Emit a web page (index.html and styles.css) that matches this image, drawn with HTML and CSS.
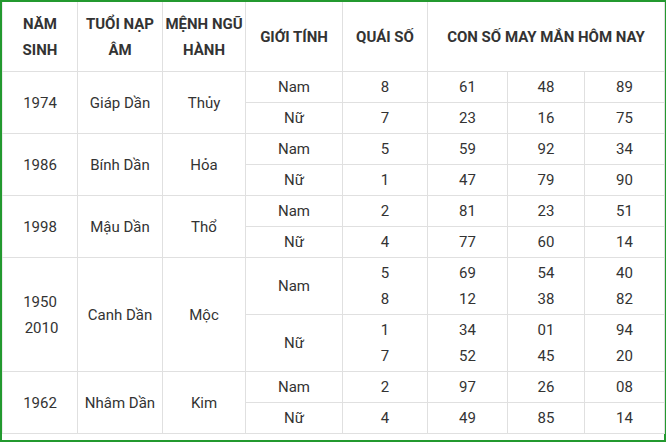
FILE: index.html
```html
<!DOCTYPE html>
<html lang="vi">
<head>
<meta charset="utf-8">
<title>Con số may mắn</title>
<link rel="stylesheet" href="styles.css">
</head>
<body>
<div class="frame">
  <table class="luck">
    <colgroup>
      <col class="c-year"><col class="c-age"><col class="c-elem"><col class="c-sex"><col class="c-qs"><col class="c-n1"><col class="c-n2"><col class="c-n3">
    </colgroup>
    <thead>
      <tr class="head">
        <th>NĂM<br>SINH</th>
        <th>TUỔI NẠP<br>ÂM</th>
        <th>MỆNH NGŨ<br>HÀNH</th>
        <th>GIỚI TÍNH</th>
        <th>QUÁI SỐ</th>
        <th colspan="3">CON SỐ MAY MẮN HÔM NAY</th>
      </tr>
    </thead>
    <tbody>
      <tr class="r1">
        <td rowspan="2">1974</td><td rowspan="2">Giáp Dần</td><td rowspan="2">Thủy</td>
        <td>Nam</td><td>8</td><td>61</td><td>48</td><td>89</td>
      </tr>
      <tr class="r1">
        <td>Nữ</td><td>7</td><td>23</td><td>16</td><td>75</td>
      </tr>
      <tr class="r1">
        <td rowspan="2">1986</td><td rowspan="2">Bính Dần</td><td rowspan="2">Hỏa</td>
        <td>Nam</td><td>5</td><td>59</td><td>92</td><td>34</td>
      </tr>
      <tr class="r1">
        <td>Nữ</td><td>1</td><td>47</td><td>79</td><td>90</td>
      </tr>
      <tr class="r1">
        <td rowspan="2">1998</td><td rowspan="2">Mậu Dần</td><td rowspan="2">Thổ</td>
        <td>Nam</td><td>2</td><td>81</td><td>23</td><td>51</td>
      </tr>
      <tr class="r1">
        <td>Nữ</td><td>4</td><td>77</td><td>60</td><td>14</td>
      </tr>
      <tr class="r2">
        <td rowspan="2">1950<br><span class="nudge">2010</span></td><td rowspan="2">Canh Dần</td><td rowspan="2">Mộc</td>
        <td>Nam</td><td>5<br>8</td><td>69<br>12</td><td>54<br>38</td><td>40<br>82</td>
      </tr>
      <tr class="r2">
        <td>Nữ</td><td>1<br>7</td><td>34<br>52</td><td>01<br>45</td><td>94<br>20</td>
      </tr>
      <tr class="r1">
        <td rowspan="2">1962</td><td rowspan="2">Nhâm Dần</td><td rowspan="2">Kim</td>
        <td>Nam</td><td>2</td><td>97</td><td>26</td><td>08</td>
      </tr>
      <tr class="r1">
        <td>Nữ</td><td>4</td><td>49</td><td>85</td><td>14</td>
      </tr>
    </tbody>
  </table>
</div>
</body>
</html>
```

FILE: styles.css
```css
html, body {
  margin: 0;
  padding: 0;
  background: #fff;
}

.frame {
  width: 666px;
  height: 442px;
  box-sizing: border-box;
  border-style: solid;
  border-color: #23992f;
  border-width: 2px 2px 2px 2px;
  background: #fff;
}

.luck {
  table-layout: fixed;
  border-collapse: collapse;
  width: 662px;
  font-family: Roboto, "Noto Sans", "Liberation Sans", sans-serif;
  font-size: 15px;
  color: #333;
  text-align: center;
}

.c-year { width: 75px; }
.c-age  { width: 85px; }
.c-elem { width: 83px; }
.c-sex  { width: 97px; }
.c-qs   { width: 85px; }
.c-n1   { width: 80px; }
.c-n2   { width: 77px; }
.c-n3   { width: 80px; }

.luck th,
.luck td {
  border: 1px solid #e0e0e0;
  padding: 0 2px;
  line-height: 26px;
  vertical-align: middle;
  white-space: nowrap;
}

.luck thead tr:first-child th {
  border-top-color: transparent;
}
.luck tr > :first-child {
  border-left-color: #ececec;
}

.luck th {
  font-weight: 700;
  color: #333;
}

.head { height: 69px; }
.r1 { height: 31px; }
.r2 { height: 57px; }

.nudge {
  padding-left: 3px;
}
```
